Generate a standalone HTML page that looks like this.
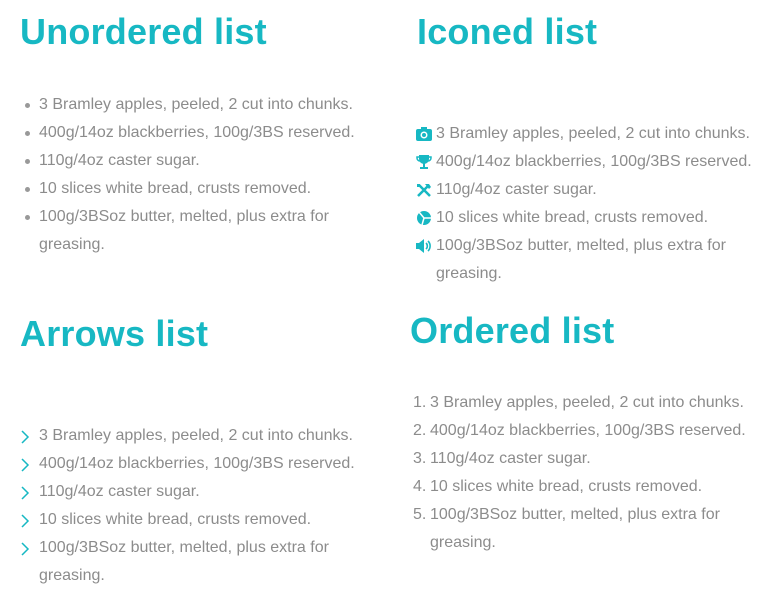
<!DOCTYPE html>
<html><head><meta charset="utf-8"><style>
body{margin:0;width:768px;height:605px;background:#fff;position:relative;overflow:hidden;font-family:"Liberation Sans",sans-serif}
h2{position:absolute;margin:0;color:#17b8c3;font-size:36px;font-weight:bold;line-height:40px;letter-spacing:0.2px}
ul{position:absolute;margin:0;padding:0;list-style:none;color:#8c8c8c;font-size:16px;line-height:28px}
li{position:relative;padding-left:20px}
.dot li:before{content:"";position:absolute;left:6px;top:12px;width:5px;height:5px;border-radius:50%;background:#999}
.arr li svg{position:absolute;left:2px;top:8px}
.ic li svg{position:absolute;left:0;top:7px}
.ord li span{position:absolute;left:3px}
</style></head><body>
<h2 style="left:20px;top:12px">Unordered list</h2>
<ul class="dot" style="left:19px;top:91px;width:345px">
<li>3 Bramley apples, peeled, 2 cut into chunks.</li>
<li>400g/14oz blackberries, 100g/3BS reserved.</li>
<li>110g/4oz caster sugar.</li>
<li>10 slices white bread, crusts removed.</li>
<li>100g/3BSoz butter, melted, plus extra for greasing.</li>
</ul>
<h2 style="left:417px;top:12px">Iconed list</h2>
<ul class="ic" style="left:416px;top:120px;width:345px">
<li><svg width="16" height="14" viewBox="0 0 16 14"><rect x="0" y="2" width="16" height="12" rx="2" fill="#17b8c3"/><rect x="5" y="0" width="6" height="3" fill="#17b8c3"/><circle cx="8" cy="8" r="3.5" fill="#fff"/><circle cx="8" cy="8" r="2" fill="#17b8c3"/></svg>3 Bramley apples, peeled, 2 cut into chunks.</li>
<li><svg width="16" height="14" viewBox="0 0 16 14"><path d="M3 0h10v4a5 5 0 0 1-10 0z" fill="#17b8c3"/><path d="M3 2H1v1a3 3 0 0 0 3 3M13 2h2v1a3 3 0 0 1-3 3" stroke="#17b8c3" fill="none" stroke-width="1.5"/><rect x="7" y="8" width="2" height="4" fill="#17b8c3"/><rect x="4" y="12" width="8" height="2" fill="#17b8c3"/></svg>400g/14oz blackberries, 100g/3BS reserved.</li>
<li><svg width="16" height="14" viewBox="0 0 16 14"><path d="M2 13L12 3M3 2l11 11" stroke="#17b8c3" stroke-width="2.5"/><path d="M9 1l4 0 2 3-2 2z" fill="#17b8c3"/><path d="M1 1l3 0 0 3-3 0z" fill="#17b8c3"/></svg>110g/4oz caster sugar.</li>
<li><svg width="16" height="14" viewBox="0 0 16 14"><circle cx="8" cy="7" r="7" fill="#17b8c3"/><path d="M8 7L3 1M8 7L6 14M8 7h7" stroke="#fff" stroke-width="1.5"/></svg>10 slices white bread, crusts removed.</li>
<li><svg width="16" height="14" viewBox="0 0 16 14"><path d="M0 4h3l5-4v14l-5-4H0z" fill="#17b8c3"/><path d="M10 4a4 4 0 0 1 0 6M12 2a7 7 0 0 1 0 10" stroke="#17b8c3" stroke-width="1.6" fill="none"/></svg>100g/3BSoz butter, melted, plus extra for greasing.</li>
</ul>
<h2 style="left:20px;top:314px">Arrows list</h2>
<ul class="arr" style="left:19px;top:422px;width:345px">
<li><svg width="9" height="14" viewBox="0 0 9 14"><path d="M1 1l6 6-6 6" stroke="#17b8c3" stroke-width="1.5" fill="none"/></svg>3 Bramley apples, peeled, 2 cut into chunks.</li>
<li><svg width="9" height="14" viewBox="0 0 9 14"><path d="M1 1l6 6-6 6" stroke="#17b8c3" stroke-width="1.5" fill="none"/></svg>400g/14oz blackberries, 100g/3BS reserved.</li>
<li><svg width="9" height="14" viewBox="0 0 9 14"><path d="M1 1l6 6-6 6" stroke="#17b8c3" stroke-width="1.5" fill="none"/></svg>110g/4oz caster sugar.</li>
<li><svg width="9" height="14" viewBox="0 0 9 14"><path d="M1 1l6 6-6 6" stroke="#17b8c3" stroke-width="1.5" fill="none"/></svg>10 slices white bread, crusts removed.</li>
<li><svg width="9" height="14" viewBox="0 0 9 14"><path d="M1 1l6 6-6 6" stroke="#17b8c3" stroke-width="1.5" fill="none"/></svg>100g/3BSoz butter, melted, plus extra for greasing.</li>
</ul>
<h2 style="left:410px;top:311px">Ordered list</h2>
<ul class="ord" style="left:410px;top:389px;width:345px">
<li><span>1.</span>3 Bramley apples, peeled, 2 cut into chunks.</li>
<li><span>2.</span>400g/14oz blackberries, 100g/3BS reserved.</li>
<li><span>3.</span>110g/4oz caster sugar.</li>
<li><span>4.</span>10 slices white bread, crusts removed.</li>
<li><span>5.</span>100g/3BSoz butter, melted, plus extra for greasing.</li>
</ul>
</body></html>
